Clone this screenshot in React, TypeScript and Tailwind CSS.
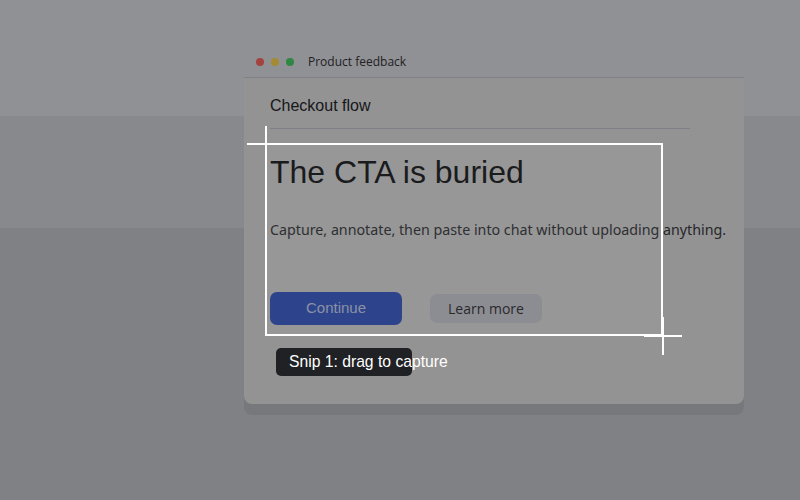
export default function App() {
  return (
    <div className="relative h-[500px] w-[800px] overflow-hidden bg-[linear-gradient(to_bottom,#909195_0px,#909195_116px,#88898d_116px,#88898d_228px,#808185_228px)] font-['Liberation_Sans',Arial,sans-serif]">
      <div className="pl-[244px] pt-[45px]">
        <div className="w-[500px]">
          {/* title bar */}
          <div className="flex h-[33px] items-center gap-[7px] border-b border-[#7f8186] pl-[12px] pt-[1px]">
            <span className="h-[8px] w-[8px] rounded-full bg-[#a3433f]" />
            <span className="h-[8px] w-[8px] rounded-full bg-[#a38a33]" />
            <span className="h-[8px] w-[8px] rounded-full bg-[#2f8743]" />
            <span className="ml-[7px] font-['Open_Sans',sans-serif] text-[12px] text-[#1f2023]">Product feedback</span>
          </div>
          {/* body */}
          <div className="h-[326px] rounded-b-[8px] bg-[#939393] px-[26px] pt-[17px] shadow-[0_11px_0_#77787c]">
            <p className="text-[16px] leading-[21px] text-[#16171a]">Checkout flow</p>
            <div className="mt-[12px] h-px w-[420px] bg-[#7e8085]" />
            <h1 className="mt-[25px] text-[32px] leading-[37px] text-[#111214]">The CTA is buried</h1>
            <p className="mt-[29px] whitespace-nowrap font-['Noto_Sans',sans-serif] text-[14.25px] leading-[20px] text-[#26272a]">
              Capture, annotate, then paste into chat without uploading anything.
            </p>
            <div className="mt-[52px] flex items-center gap-[28px]">
              <button className="h-[33px] w-[132px] rounded-[7px] bg-[#253d88] text-[15px] text-[#868da3]">Continue</button>
              <button className="h-[29px] w-[112px] rounded-[7px] bg-[#88898f] font-['Open_Sans',sans-serif] text-[14px] text-[#1f2023]">
                Learn more
              </button>
            </div>
          </div>
        </div>
      </div>

      {/* selection with crosshair handles */}
      <div className="absolute left-[265px] top-[143px] h-[193px] w-[398px] border-2 border-white bg-white/[0.04]">
        <div className="absolute left-[-20px] top-[-2px] h-[2px] w-[38px] bg-white" />
        <div className="absolute left-[-2px] top-[-19px] h-[38px] w-[2px] bg-white" />
        <div className="absolute right-[-21px] bottom-[-3px] h-[2px] w-[38px] bg-white" />
        <div className="absolute right-[-3px] bottom-[-21px] h-[38px] w-[2px] bg-white" />
      </div>

      {/* tooltip */}
      <div className="absolute left-[276px] top-[348px] flex h-[28px] w-[136px] items-center whitespace-nowrap rounded-[5px] bg-[#202124] pl-[13px] text-[15.7px] text-white">
        Snip 1: drag to capture
      </div>
    </div>
  );
}
